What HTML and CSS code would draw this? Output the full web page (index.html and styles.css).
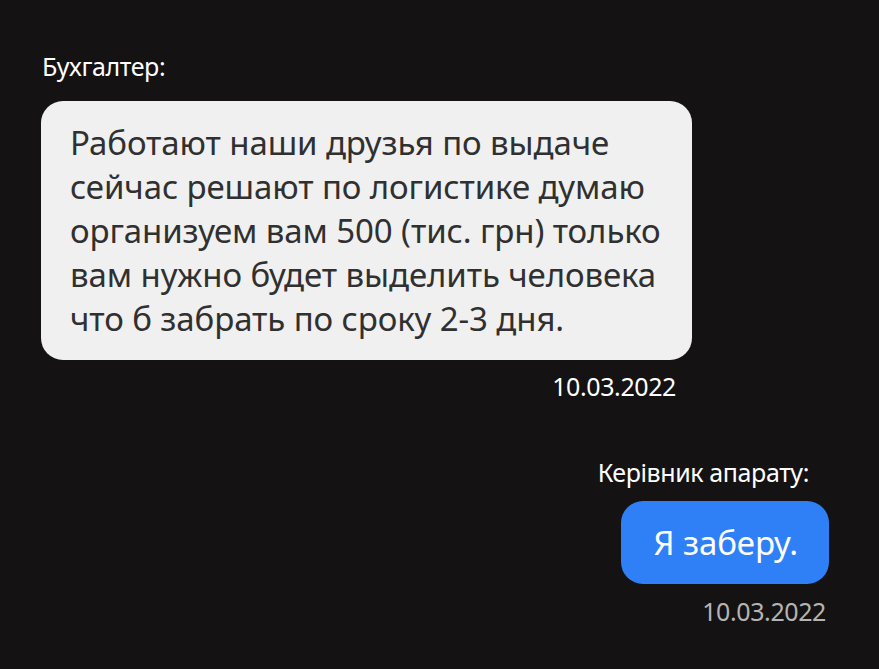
FILE: index.html
```html
<!DOCTYPE html>
<html lang="ru">
<head>
    <meta charset="UTF-8">
    <meta name="viewport" content="width=device-width, initial-scale=1.0">
    <title>Переписка</title>
    <link rel="stylesheet" href="styles.css">
</head>
<body>
    <div class="chat">
        <div class="msg msg-left">
            <div class="author">Бухгалтер:</div>
            <div class="bubble bubble-gray">Работают наши друзья по выдаче<br>сейчас решают по логистике думаю<br>организуем вам 500 (тис. грн) только<br>вам нужно будет выделить человека<br>что б забрать по сроку 2-3 дня.</div>
            <div class="date">10.03.2022</div>
        </div>
        <div class="msg msg-right">
            <div class="author">Керівник апарату:</div>
            <div class="bubble bubble-blue">Я заберу.</div>
            <div class="date date-dim">10.03.2022</div>
        </div>
    </div>
</body>
</html>
```

FILE: styles.css
```css
body {
    margin: 0;
    background-color: #141213;
    color: #fff;
    font-family: "Noto Sans", "Open Sans", sans-serif;
}
.chat {
    width: 879px;
    height: 669px;
    box-sizing: border-box;
    padding: 51px 50px 0 41px;
    display: flex;
    flex-direction: column;
}
.msg {
    display: flex;
    flex-direction: column;
}
.msg-left {
    align-items: flex-start;
    width: 651px;
}
.msg-right {
    align-items: flex-end;
    margin-top: 56px;
}
.author {
    font-size: 25px;
    line-height: 30px;
    margin-left: 1px;
    letter-spacing: -0.4px;
}
.msg-left .author {
    margin-bottom: 20px;
}
.msg-right .author {
    margin-right: 20px;
    margin-bottom: 14px;
}
.bubble {
    border-radius: 22px;
    font-size: 33px;
    line-height: 44px;
    letter-spacing: -0.1px;
    white-space: nowrap;
}
.bubble-gray {
    background-color: #f0f0f0;
    color: #303030;
    padding: 20px 20px 19px 29px;
    width: 651px;
    box-sizing: border-box;
}
.bubble-blue {
    background-color: #2f80f6;
    color: #fff;
    padding: 20px 31px 19px 33px;
}
.date {
    font-size: 25px;
    line-height: 30px;
    margin-top: 11px;
    letter-spacing: -0.4px;
}
.msg-left .date {
    align-self: flex-end;
    margin-right: 16px;
}
.date-dim {
    color: #b4b4b4;
    margin-right: 3px;
    margin-top: 12px;
}
```
